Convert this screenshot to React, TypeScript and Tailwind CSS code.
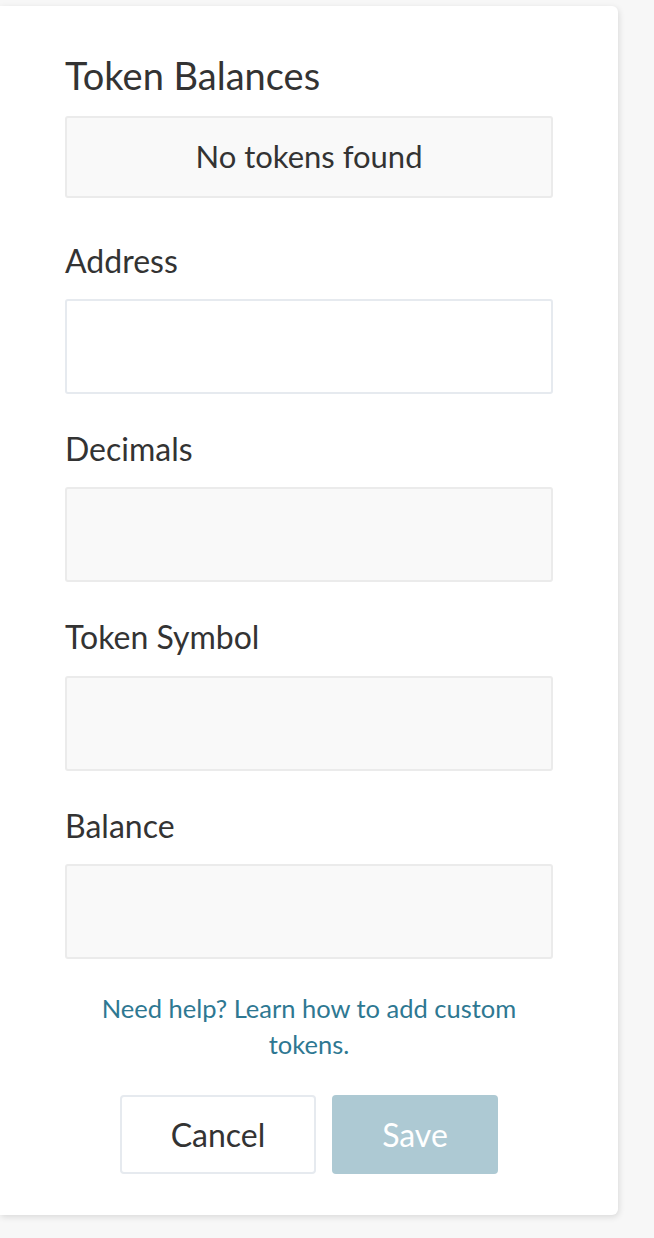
import React from "react";

const Field = ({ label, disabled }: { label: string; disabled?: boolean }) => (
  <div className="flex flex-col">
    <label className="text-[32px] leading-[1.2] text-[#333333]">{label}</label>
    <div
      className={`mt-[19px] h-[95px] rounded-[3px] border-2 ${
        disabled ? "bg-[#f9f9f9] border-[#ebebeb]" : "bg-white border-[#e6eaef]"
      }`}
    />
  </div>
);

export default function App() {
  return (
    <div className="min-h-[1238px] bg-[#f7f7f7] pt-[6px] font-['Lato','Liberation_Sans',sans-serif]">
      <div className="w-[618px] rounded-r-[6px] bg-white px-[65px] pb-[41px] pt-[47px] shadow-[1px_2px_6px_rgba(0,0,0,0.12)]">
        <h2 className="text-[38px] leading-[1.2] text-[#333333]">Token Balances</h2>
        <div className="mt-[17px] flex h-[82px] items-center justify-center rounded-[3px] border-2 border-[#ebebeb] bg-[#f9f9f9] text-[31px] text-[#333333]">
          No tokens found
        </div>
        <div className="mt-[44px] flex flex-col gap-[36px]">
          <Field label="Address" />
          <Field label="Decimals" disabled />
          <Field label="Token Symbol" disabled />
          <Field label="Balance" disabled />
        </div>
        <p className="mt-[31px] text-center text-[25.5px] leading-[36px] text-[#2e7892]">
          Need help? Learn how to add custom tokens.
        </p>
        <div className="mt-[33px] flex justify-center gap-[16px]">
          <button className="h-[79px] w-[196px] rounded-[4px] border-2 border-[#e6eaef] bg-white text-[32px] text-[#333333]">
            Cancel
          </button>
          <button className="h-[79px] w-[166px] rounded-[4px] bg-[#adc9d3] text-[32px] text-white">
            Save
          </button>
        </div>
      </div>
    </div>
  );
}
